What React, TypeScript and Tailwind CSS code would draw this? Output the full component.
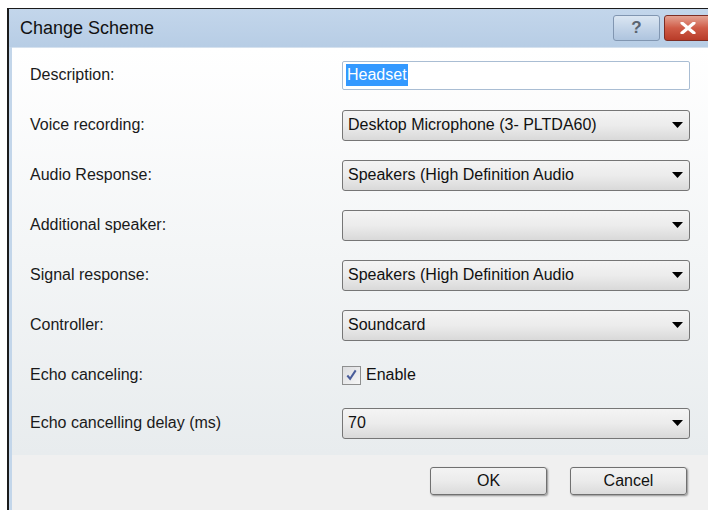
import React from 'react';

const font = { fontFamily: '"Liberation Sans", Arial, sans-serif' };

type Row =
  | { label: string; kind: 'text'; value: string }
  | { label: string; kind: 'select'; value: string }
  | { label: string; kind: 'check'; value: string };

const rows: Row[] = [
  { label: 'Description:', kind: 'text', value: 'Headset' },
  { label: 'Voice recording:', kind: 'select', value: 'Desktop Microphone (3- PLTDA60)' },
  { label: 'Audio Response:', kind: 'select', value: 'Speakers (High Definition Audio' },
  { label: 'Additional speaker:', kind: 'select', value: '' },
  { label: 'Signal response:', kind: 'select', value: 'Speakers (High Definition Audio' },
  { label: 'Controller:', kind: 'select', value: 'Soundcard' },
  { label: 'Echo canceling:', kind: 'check', value: 'Enable' },
  { label: 'Echo cancelling delay (ms)', kind: 'select', value: '70' },
];

function DropDown({ value }: { value: string }) {
  return (
    <div className="flex h-[31px] w-[348px] items-center rounded-[3px] border border-[#767676] bg-gradient-to-b from-[#f4f4f4] via-[#ececec] to-[#d9d9d9] pl-[5px] pr-[6px]">
      <span className="flex-1 text-[16px] text-[#111]">{value}</span>
      <svg width="11" height="6" viewBox="0 0 11 6">
        <polygon points="0,0 11,0 5.5,6" fill="#000" />
      </svg>
    </div>
  );
}

function TextBox({ value }: { value: string }) {
  return (
    <div className="flex h-[29px] w-[348px] items-center rounded-[2px] border border-[#a9bdd3] bg-white pl-[3px]">
      <span className="bg-[#3399ff] px-px text-[16px] leading-[22px] text-white">{value}</span>
    </div>
  );
}

function CheckBox({ label }: { label: string }) {
  return (
    <div className="flex items-center gap-[5px]">
      <div className="flex h-[19px] w-[19px] items-center justify-center border border-[#8e8f8f] bg-gradient-to-br from-[#dcdde0] to-[#f6f6f6] p-[2px]">
        <svg width="14" height="14" viewBox="0 0 14 14">
          <path d="M2.5 7.5 L5.5 11 L11.5 2" fill="none" stroke="#4a5d9a" strokeWidth="2.2" />
        </svg>
      </div>
      <span className="text-[16px] text-[#111]">{label}</span>
    </div>
  );
}

function DialogButton({ children }: { children: React.ReactNode }) {
  return (
    <button className="h-[28px] w-[117px] rounded-[3px] border border-[#707070] bg-gradient-to-b from-[#f3f3f3] via-[#ebebeb] to-[#dbdbdb] text-[16px] text-[#111] shadow-[1px_1px_2px_rgba(0,0,0,0.4)]">
      {children}
    </button>
  );
}

export default function App() {
  return (
    <div className="h-[510px] w-[708px] overflow-hidden bg-white pl-[7px] pt-[8px]" style={font}>
      <div className="flex w-[704px] flex-col border-l-2 border-t border-[#1b1b1b]">
        {/* caption */}
        <div className="flex h-[38px] bg-gradient-to-b from-[#c3d6eb] to-[#b7cde5]">
          <span className="self-center pl-[11px] text-[18px] text-[#111]">Change Scheme</span>
          <div className="ml-auto mt-[6px] flex gap-[4px]">
            <div className="flex h-[26px] w-[47px] items-center justify-center rounded-[3px] border border-[#8196b1] bg-gradient-to-b from-[#dbe6f2] via-[#c3d4e8] to-[#aec4de] text-[17px] font-bold text-[#5a6470]">
              ?
            </div>
            <div className="flex h-[26px] w-[47px] items-center justify-center rounded-[3px] border border-[#7d2e25] bg-gradient-to-b from-[#e3a293] via-[#cf5b47] to-[#b83b28]">
              <svg width="16" height="12" viewBox="0 0 16 12">
                <path d="M2 1 L14 11 M14 1 L2 11" stroke="#fff" strokeWidth="3.2" strokeLinecap="round" />
              </svg>
            </div>
          </div>
        </div>

        <div className="flex">
          <div className="w-[3px] bg-[#c3d6ea]" />
          <div className="flex flex-1 flex-col">
            {/* form */}
            <div className="flex h-[408px] flex-col border-t border-[#d5e1ee] bg-gradient-to-b from-white to-[#e8ecee] pl-[18px] pt-[2px]">
              {rows.map((r, i) => (
                <div
                  key={r.label}
                  className={`grid grid-cols-[312px_348px] items-center ${i === rows.length - 1 ? 'h-[46px]' : 'h-[50px]'}`}
                >
                  <span className="text-[16px] text-[#1a1a1a]">{r.label}</span>
                  {r.kind === 'text' && <TextBox value={r.value} />}
                  {r.kind === 'select' && <DropDown value={r.value} />}
                  {r.kind === 'check' && <CheckBox label={r.value} />}
                </div>
              ))}
            </div>

            {/* buttons */}
            <div className="flex h-[60px] gap-[23px] bg-[#f0f0f0] pl-[418px] pt-[12px]">
              <DialogButton>OK</DialogButton>
              <DialogButton>Cancel</DialogButton>
            </div>
          </div>
        </div>
      </div>
    </div>
  );
}
